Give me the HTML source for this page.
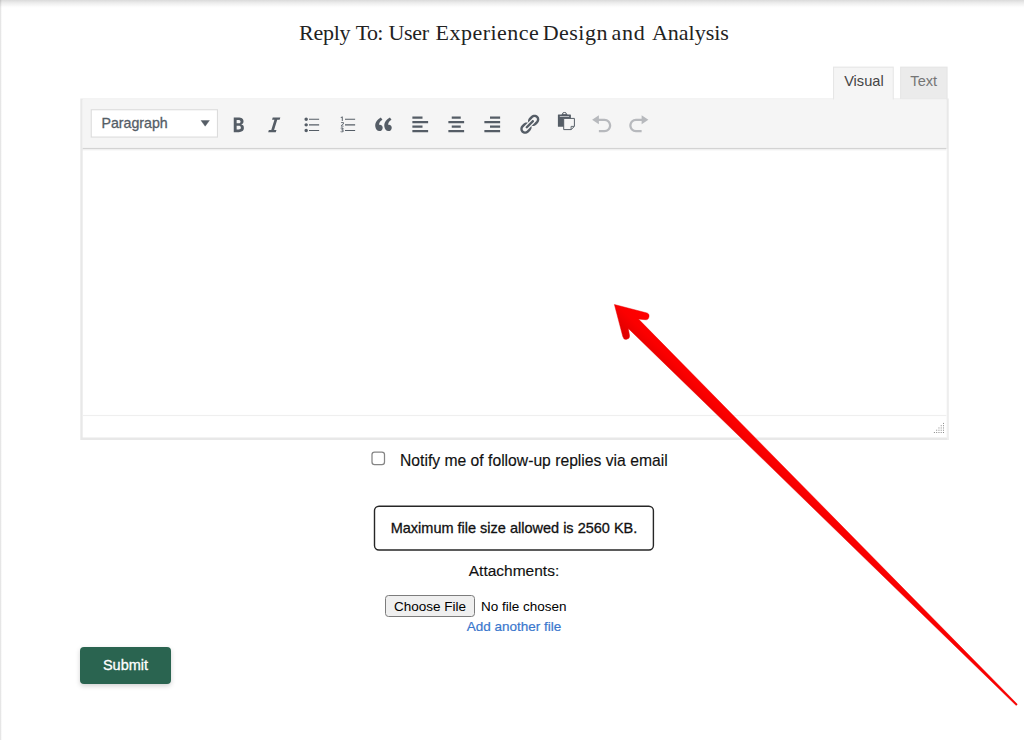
<!DOCTYPE html>
<html>
<head>
<meta charset="utf-8">
<title>Reply</title>
<style>
*{box-sizing:border-box;margin:0;padding:0}
html,body{width:1024px;height:740px;overflow:hidden;background:#fff}
body{position:relative;font-family:"Liberation Sans",sans-serif;color:#111}
.abs{position:absolute}
#topshadow{left:0;top:0;width:1024px;height:8px;background:linear-gradient(to bottom,#dadada 0,#ececec 35%,#fbfbfb 80%,#fff 100%)}
#leftedge{left:0;top:0;width:2px;height:740px;background:linear-gradient(to right,rgba(0,0,0,.13) 0,rgba(0,0,0,.07) 50%,rgba(0,0,0,0) 90%)}
#title{left:0;top:18px;width:1024px;height:30px;font-family:"Liberation Serif",serif;font-size:22px;line-height:30px;color:#222;white-space:nowrap}
#title span{position:absolute;top:0;white-space:nowrap}
.tab{top:67px;height:28px;font-size:14.6px;line-height:28px;text-align:center;white-space:nowrap}
#tabv{left:833.4px;width:61px;color:#444}
#tabt{left:900px;width:47.5px;color:#757575}
#select{left:101.5px;top:109px;font-size:14.2px;line-height:28px;color:#555d66;white-space:nowrap}
.ic{position:absolute}
#cb{left:0;top:0}
#notify{left:400px;top:450.5px;font-size:15.7px;line-height:20px;white-space:nowrap;color:#111}
#maxbox{left:374px;top:505.5px;width:280px;height:45px;text-align:center;font-size:14.5px;line-height:45px;color:#111;white-space:nowrap}
#attach{left:0;top:560.5px;width:1028px;text-align:center;font-size:15.5px;line-height:20px}
#choose{left:385px;top:595px;width:90px;height:22px;border:1px solid #7c7c7c;border-radius:3.5px;background:#efefef;font-size:13.5px;line-height:21.5px;text-align:center;color:#000;white-space:nowrap}
#nofile{left:481px;top:596.8px;font-size:13.5px;line-height:20px;white-space:nowrap;color:#000}
#addfile{left:0;top:618px;width:1028px;text-align:center;font-size:13.5px;line-height:18px;color:#3a77cd}
#submit{left:80px;top:647px;width:91px;height:37px;background:#2a6450;border-radius:4px;color:#fff;font-size:14.5px;line-height:36px;text-align:center;box-shadow:0 2px 5px rgba(0,0,0,.18)}
#maxbox,#submit,#select{-webkit-text-stroke:0.3px currentColor}
#notify,#attach{-webkit-text-stroke:0.15px currentColor}
#addfile{-webkit-text-stroke:0.2px currentColor}
</style>
</head>
<body>
<div id="topshadow" class="abs"></div>
<div id="leftedge" class="abs"></div>
<div id="title" class="abs"><span style="left:299.1px;letter-spacing:-0.300px">Reply</span><span style="left:355.8px;letter-spacing:-0.700px">To:</span><span style="left:388.5px;letter-spacing:-0.333px">User</span><span style="left:435.6px;letter-spacing:0.467px">Experience</span><span style="left:542.7px;letter-spacing:0.480px">Design</span><span style="left:611.6px;letter-spacing:0.650px">and</span><span style="left:652.0px;letter-spacing:-0.014px">Analysis</span></div>

<svg id="frame" class="abs" style="left:0;top:0" width="1024" height="740" viewBox="0 0 1024 740">
  <defs><linearGradient id="tsh" x1="0" y1="0" x2="0" y2="1"><stop offset="0" stop-color="#000" stop-opacity="0.07"/><stop offset="1" stop-color="#000" stop-opacity="0"/></linearGradient></defs>
  <!-- tabs -->
  <rect x="900.1" y="66.6" width="47.5" height="32.5" fill="#e5e5e5"/>
  <rect x="901.2" y="67.7" width="45.3" height="31.4" fill="#ebebeb"/>
  <rect x="833" y="66.6" width="60.8" height="33.2" fill="#e6e6e6"/>
  <!-- editor frame -->
  <path fill-rule="evenodd" fill="#e8e8e8" d="M80.3 98.4H948.7V439.9H80.3ZM82.7 99.6V437.6H946.3V99.6Z"/>
  <rect x="946.3" y="149" width="2.4" height="288.6" fill="#fff"/>
  <rect x="947" y="149" width="1.85" height="290.9" fill="#eeeeee"/>
  <rect x="82.7" y="99.6" width="863.6" height="48.4" fill="#f5f5f5"/>
  <rect x="834.1" y="67.7" width="58.6" height="33" fill="#f5f5f5"/>
  <rect x="82.7" y="147.9" width="863.6" height="1.15" fill="#d3d3d3"/>
  <rect x="82.7" y="149.05" width="863.6" height="2.2" fill="url(#tsh)"/>
  <rect x="82.7" y="414.9" width="863.6" height="1.2" fill="#efefef"/>
  <!-- select -->
  <rect x="90.7" y="109.2" width="127.3" height="28.4" fill="#dcdcdc"/>
  <rect x="91.8" y="110.3" width="125.1" height="26.2" fill="#fff"/>
</svg>
<div id="tabv" class="abs tab">Visual</div>
<div id="tabt" class="abs tab">Text</div>
<div id="select" class="abs">Paragraph</div>

<!--ICONS-->
<svg class="ic" style="left:226.85px;top:112.95px" width="22.5" height="22.5" viewBox="0 0 20 20"><path fill="#555d66" d="M6 4v13h4.54c1.37 0 2.46-.33 3.26-1 .8-.66 1.2-1.58 1.2-2.77 0-.84-.17-1.51-.51-2.01s-.9-.85-1.67-1.03v-.09c.57-.1 1.02-.4 1.36-.9s.51-1.13.51-1.91c0-1.14-.39-1.98-1.17-2.5C12.75 4.26 11.5 4 9.78 4H6zm2.57 5.15V6.26h1.36c.73 0 1.27.11 1.61.32.34.22.51.58.51 1.07 0 .54-.16.92-.47 1.15s-.82.35-1.51.35h-1.5zm0 2.19h1.6c1.44 0 2.16.53 2.16 1.61 0 .6-.17 1.05-.51 1.34s-.86.43-1.57.43H8.57v-3.38z"/></svg>
<svg class="ic" style="left:263.22px;top:112.95px" width="22.5" height="22.5" viewBox="0 0 20 20"><path fill="#555d66" d="M14.78 6h-2.13l-2.8 9h2.12l-.62 2H4.6l.62-2h2.14l2.8-9H8.03l.62-2h6.75z"/></svg>
<svg class="ic" style="left:299.59px;top:112.95px" width="22.5" height="22.5" viewBox="0 0 20 20"><path fill="#555d66" d="M5.5 7C4.67 7 4 6.33 4 5.5 4 4.68 4.67 4 5.5 4 6.32 4 7 4.68 7 5.5 7 6.33 6.32 7 5.5 7zM8 5h9v1H8V5zm-2.5 7c-.83 0-1.5-.67-1.5-1.5C4 9.680 4.67 9 5.5 9c.82 0 1.5.68 1.5 1.5 0 .83-.68 1.5-1.5 1.5zM8 10h9v1H8v-1zm-2.5 7c-.83 0-1.5-.67-1.5-1.5 0-.82.67-1.5 1.5-1.5.82 0 1.5.68 1.5 1.5 0 .83-.68 1.5-1.5 1.5zM8 15h9v1H8v-1z"/></svg>
<svg class="ic" style="left:335.96px;top:112.95px" width="22.5" height="22.5" viewBox="0 0 20 20"><path fill="#555d66" d="M6 7V3h-.69L4.02 4.03l.4.51.46-.37c.06-.05.16-.14.3-.28l-.02.42V7H6zm2-2h9v1H8V5zm-1.23 6.950v-.7H5.380v-.04l.51-.48c.33-.31.57-.54.7-.71.14-.17.24-.33.3-.49.07-.16.1-.33.1-.51 0-.21-.05-.4-.16-.56-.1-.16-.25-.28-.44-.37s-.41-.14-.65-.14c-.19 0-.36.02-.51.06-.15.03-.29.09-.42.15-.12.07-.29.19-.48.35l.45.54c.16-.13.31-.23.45-.3.15-.07.3-.1.45-.1.14 0 .26.03.35.11s.13.19.13.35c0 .1-.02.2-.06.3s-.1.2-.19.31c-.09.11-.28.3-.57.6l-.96.97v.66h2.390zM8 10h9v1H8v-1zm-1.290 3.950c0-.3-.12-.54-.37-.71-.24-.17-.58-.26-1-.26-.52 0-.96.13-1.330.4l.4.6c.17-.11.32-.19.46-.23.14-.05.27-.07.41-.07.38 0 .58.15.58.46 0 .2-.07.35-.22.43s-.38.12-.7.12h-.3v.66h.3c.33 0 .57.04.72.12.16.08.23.22.23.41 0 .22-.07.37-.2.47-.14.1-.35.15-.63.15-.19 0-.38-.03-.57-.08s-.36-.12-.51-.21v.73c.35.15.74.22 1.180.22.53 0 .94-.11 1.220-.33.29-.22.43-.52.43-.92 0-.27-.09-.48-.26-.64s-.42-.26-.74-.3v-.02c.27-.06.49-.19.65-.37.16-.18.25-.39.25-.63zM8 15h9v1H8v-1z"/></svg>
<svg class="ic" style="left:372.33px;top:112.95px" width="22.5" height="22.5" viewBox="0 0 20 20"><path fill="#555d66" d="M9.49 13.22c0-.74-.2-1.38-.61-1.9-.62-.78-1.830-.88-2.530-.72-.29-1.650 1.110-3.750 2.920-4.650L7.880 4c-2.730 1.300-5.420 4.280-4.960 8.050C3.210 14.430 4.590 16 6.540 16c.85 0 1.560-.25 2.120-.75s.83-1.180.83-2.030zm8.050 0c0-.74-.2-1.380-.61-1.900-.63-.78-1.830-.88-2.530-.72-.29-1.650 1.110-3.750 2.920-4.650L15.930 4c-2.730 1.300-5.410 4.280-4.950 8.050.29 2.380 1.660 3.950 3.610 3.950.85 0 1.560-.25 2.120-.75s.83-1.180.83-2.030z"/></svg>
<svg class="ic" style="left:408.70px;top:112.95px" width="22.5" height="22.5" viewBox="0 0 20 20"><path fill="#555d66" d="M12 5V3H3v2h9zm5 4V7H3v2h14zm-5 4v-2H3v2h9zm5 4v-2H3v2h14z"/></svg>
<svg class="ic" style="left:445.07px;top:112.95px" width="22.5" height="22.5" viewBox="0 0 20 20"><path fill="#555d66" d="M14 5V3H6v2h8zm3 4V7H3v2h14zm-3 4v-2H6v2h8zm3 4v-2H3v2h14z"/></svg>
<svg class="ic" style="left:481.44px;top:112.95px" width="22.5" height="22.5" viewBox="0 0 20 20"><path fill="#555d66" d="M17 5V3H8v2h9zm0 4V7H3v2h14zm0 4v-2H8v2h9zm0 4v-2H3v2h14z"/></svg>
<svg class="ic" style="left:517.81px;top:112.95px" width="22.5" height="22.5" viewBox="0 0 20 20"><path fill="#555d66" d="M17.74 2.76c1.68 1.69 1.68 4.41 0 6.1l-1.53 1.52c-1.12 1.12-2.7 1.47-4.14 1.09l2.620-2.610.76-.77.76-.76c.84-.84.84-2.2 0-3.040-.84-.85-2.2-.85-3.040 0l-.77.76-3.380 3.380c-.37-1.440-.02-3.020 1.1-4.140l1.520-1.530c1.690-1.680 4.420-1.680 6.100 0zM8.590 13.430l5.340-5.340c.42-.42.42-1.1 0-1.520-.44-.43-1.130-.39-1.530 0l-5.330 5.340c-.42.42-.42 1.1 0 1.520.44.43 1.130.39 1.520 0zm-.76 2.290l4.140-4.150c.38 1.440.03 3.020-1.090 4.140l-1.520 1.530c-1.690 1.680-4.410 1.680-6.100 0-1.680-1.680-1.680-4.420 0-6.100l1.530-1.520c1.120-1.120 2.700-1.470 4.140-1.100l-4.140 4.150c-.85.84-.85 2.2 0 3.050.84.84 2.2.84 3.040 0z"/></svg>
<svg class="ic" style="left:552px;top:108px" width="28" height="28" viewBox="0 0 28 28">
<rect x="5.9" y="6.6" width="13" height="12.1" rx="0.5" fill="#555d66"/>
<rect x="10.5" y="4.5" width="3.9" height="3.2" rx="1.6" fill="none" stroke="#555d66" stroke-width="1"/>
<rect x="9.6" y="6.2" width="5.8" height="1" fill="#555d66"/>
<rect x="7.8" y="8.1" width="9.3" height="0.8" fill="#d2d4d7"/>
<path d="M11.7 10.4H22.4V18.4L19.1 21.6H11.7Z" fill="#f5f5f5" stroke="#555d66" stroke-width="1" stroke-linejoin="round"/>
<path d="M19.1 21.4V18.4H22.2" fill="none" stroke="#555d66" stroke-width="0.9"/>
</svg>
<svg class="ic" style="left:590.55px;top:112.95px" width="22.5" height="22.5" viewBox="0 0 20 20"><path fill="#b7b9bd" d="M12 5H7V2L1 6l6 4V7h5c2.2 0 4 1.8 4 4s-1.8 4-4 4H7v2h5c3.3 0 6-2.700 6-6s-2.700-6-6-6z"/></svg>
<svg class="ic" style="left:626.92px;top:112.95px" width="22.5" height="22.5" viewBox="0 0 20 20"><path fill="#b7b9bd" d="M8 5h5V2l6 4-6 4V7H8c-2.200 0-4 1.800-4 4s1.800 4 4 4h5v2H8c-3.300 0-6-2.700-6-6s2.700-6 6-6z"/></svg>
<svg class="ic" style="left:200px;top:118px" width="12" height="12" viewBox="0 0 12 12"><path d="M1 2.5H9.4L5.2 8.2Z" fill="#555d66" stroke="#555d66" stroke-width="0.4" stroke-linejoin="round"/></svg>
<svg class="ic" style="left:0;top:0" width="1024" height="740" viewBox="0 0 1024 740" fill="#8a8a8a"><rect x="943.00" y="432.00" width="1" height="1"/><rect x="940.72" y="432.00" width="1" height="1"/><rect x="938.44" y="432.00" width="1" height="1"/><rect x="936.16" y="432.00" width="1" height="1"/><rect x="933.88" y="432.00" width="1" height="1"/><rect x="943.00" y="429.73" width="1" height="1"/><rect x="940.72" y="429.73" width="1" height="1"/><rect x="938.44" y="429.73" width="1" height="1"/><rect x="936.16" y="429.73" width="1" height="1"/><rect x="943.00" y="427.46" width="1" height="1"/><rect x="940.72" y="427.46" width="1" height="1"/><rect x="938.44" y="427.46" width="1" height="1"/><rect x="943.00" y="425.19" width="1" height="1"/><rect x="940.72" y="425.19" width="1" height="1"/><rect x="943.00" y="422.92" width="1" height="1"/></svg>
<!--/ICONS-->
<svg id="cb" class="abs" width="1024" height="740" viewBox="0 0 1024 740"><rect x="372" y="452" width="12.5" height="12.5" rx="2.6" fill="#fff" stroke="#858585" stroke-width="1.25"/></svg>
<div id="notify" class="abs">Notify me of follow-up replies via email</div>
<svg class="abs" style="left:0;top:0" width="1024" height="740" viewBox="0 0 1024 740"><rect x="374.5" y="506.2" width="278.9" height="43.8" rx="4.5" fill="none" stroke="#262626" stroke-width="1.4"/></svg>
<div id="maxbox" class="abs">Maximum file size allowed is 2560 KB.</div>
<div id="attach" class="abs">Attachments:</div>
<div id="choose" class="abs">Choose File</div>
<div id="nofile" class="abs">No file chosen</div>
<div id="addfile" class="abs">Add another file</div>
<div id="submit" class="abs">Submit</div>

<svg id="arrow" class="abs" style="left:0;top:0;z-index:10" width="1024" height="740" viewBox="0 0 1024 740">
  <defs><linearGradient id="ag" gradientUnits="userSpaceOnUse" x1="620" y1="330" x2="640" y2="310"><stop offset="0" stop-color="#e00000"/><stop offset="0.55" stop-color="#fb0000"/><stop offset="1" stop-color="#ff0000"/></linearGradient></defs>
  <path d="M614.4 304.5L646.1 312.75A3.5 3.5 0 0 1 644.9 319.7L638.5 319.1L1016.9 703.8A0.85 0.85 0 0 1 1015.7 705L628.3 328.4L629.5 335.3A3.4 3.4 0 0 1 622.8 336.6Z" fill="url(#ag)" stroke="#e60000" stroke-width="0.45" stroke-linejoin="round"/>
</svg>
</body>
</html>
